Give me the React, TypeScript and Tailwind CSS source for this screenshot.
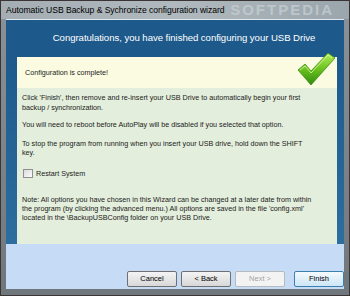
import React from "react";

const font = { fontFamily: '"Liberation Sans", Arial, sans-serif' };

function CheckMark() {
    return (
        <svg width="40" height="36" viewBox="0 0 40 36" className="absolute right-[1px] -top-[5px]">
            <defs>
                <linearGradient id="chk" x1="0" y1="0" x2="0" y2="1">
                    <stop offset="0" stopColor="#b6ec5a" />
                    <stop offset="0.5" stopColor="#6cc21f" />
                    <stop offset="1" stopColor="#2f8a0c" />
                </linearGradient>
            </defs>
            <path d="M2 18 L9 12 L15 19 L32 1 L39 6 L15 33 Z" fill="url(#chk)" stroke="#3f8f16" strokeWidth="0.8" strokeLinejoin="round" />
            <path d="M4 18 L9 14 L15 21 L32 3 L36 6" fill="none" stroke="#e4ffb0" strokeWidth="1" opacity="0.7" />
        </svg>
    );
}

function WizardButton({ label, disabled, primary }: { label: string; disabled?: boolean; primary?: boolean }) {
    return (
        <div
            className={
                "w-[50px] h-[16px] rounded-[2px] border flex items-center justify-center text-[7.5px] " +
                (disabled
                    ? "border-[#b5babd] bg-[#f3f3f3] text-[#a3a3a3]"
                    : primary
                        ? "border-[#3c7fb1] bg-gradient-to-b from-[#f4fafe] to-[#cde6f7] text-black"
                        : "border-[#707070] bg-gradient-to-b from-[#f4f4f4] to-[#d8d8d8] text-black")
            }
        >
            {label}
        </div>
    );
}

export default function App() {
    return (
        <div style={font} className="w-[350px] h-[296px] bg-gradient-to-b from-[#8a9399] to-[#6f777c] flex flex-col px-[5px] pb-[6px] border border-[#3a3434]">
            {/* Title bar */}
            <div className="h-[18px] flex items-center justify-between bg-gradient-to-r from-[#a3adb3] via-[#b0b9be] to-[#9aa6ac] -mx-[5px] px-[5px]">
                <span className="text-[8.6px] text-black tracking-[-0.05px]">Automatic USB Backup &amp; Sychronize configuration wizard</span>
                <span className="text-[15px] font-bold text-[#c9d1d5] tracking-[2px] pr-[10px] opacity-70">SOFTPEDIA</span>
            </div>

            {/* Client area */}
            <div className="flex-1 flex flex-col bg-[#1d5a8b] border-t border-[#e0e8ee]">
                <div className="h-[37px] flex items-center justify-center text-white text-[9.6px] tracking-[-0.05px] pl-[18px]">
                    Congratulations, you have finished configuring your USB Drive
                </div>

                <div className="flex-1 flex pl-[11px] pr-[7px] bg-gradient-to-b from-[#1d5a8b] to-[#2c6e9f]">
                    <div className="relative flex-1 flex flex-col text-[7.2px] text-[#1b1b1b] leading-[9.5px]">
                        <div className="h-[31px] bg-[#fbfbe1] flex items-center pl-[8px]">Configuration is complete!</div>
                        <CheckMark />
                        <div className="flex-1 bg-[#e3eedc] pl-[5px] pr-[8px] pt-[5px] flex flex-col">
                            <p>
                                Click 'Finish', then remove and re-insert your USB Drive to automatically begin your first
                                <br />
                                backup / synchronization.
                            </p>
                            <p className="mt-[8px]">You will need to reboot before AutoPlay will be disabled if you selected that option.</p>
                            <p className="mt-[9px]">
                                To stop the program from running when you insert your USB drive, hold down the SHIFT
                                <br />
                                key.
                            </p>
                            <div className="mt-[11px] flex items-center gap-[3px] pl-[1px]">
                                <div className="w-[10px] h-[9px] border border-[#8e8f8f] bg-gradient-to-br from-[#dcdcdc] to-[#fbfbfb]" />
                                <span>Restart System</span>
                            </div>
                            <p className="mt-[17px] leading-[9px]">
                                Note: All options you have chosen in this Wizard can be changed at a later date from within
                                <br />
                                the program (by clicking the advanced menu.) All options are saved in the file 'config.xml'
                                <br />
                                located in the \BackupUSBConfig folder on your USB Drive.
                            </p>
                        </div>
                    </div>
                </div>

                <div className="h-[45px] bg-[#c6dcf6] flex items-end justify-end gap-[4px] pb-[2px] pr-0">
                    <WizardButton label="Cancel" />
                    <WizardButton label="< Back" />
                    <WizardButton label="Next >" disabled />
                    <div className="ml-[5px]">
                        <WizardButton label="Finish" primary />
                    </div>
                </div>
            </div>
        </div>
    );
}
